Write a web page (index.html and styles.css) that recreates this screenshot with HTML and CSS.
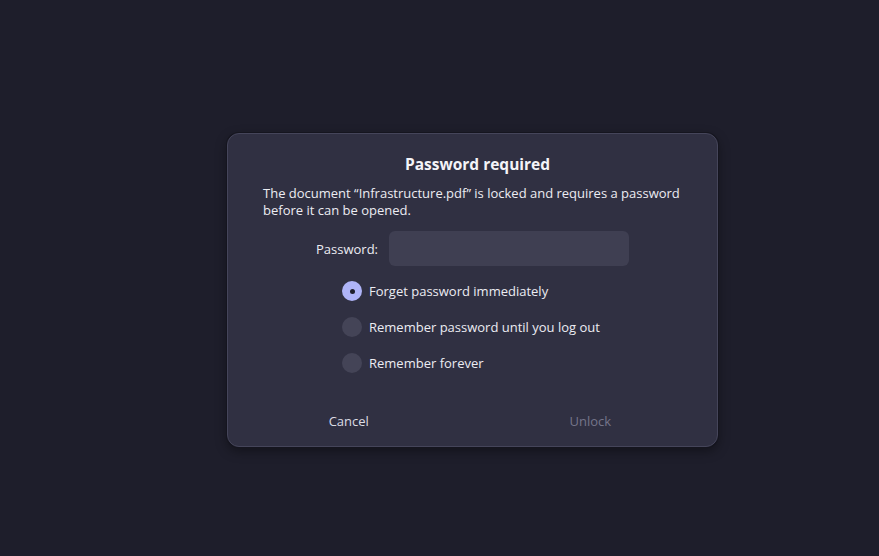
FILE: index.html
```html
<!DOCTYPE html>
<html>
<head>
<meta charset="utf-8">
<link rel="stylesheet" href="styles.css">
</head>
<body>
<div class="screen">
  <div class="dialog">
    <h1 class="title">Password required</h1>
    <p class="body">The document “Infrastructure.pdf” is locked and requires a password before it can be opened.</p>
    <div class="field">
      <span class="label">Password:</span>
      <div class="entry"></div>
    </div>
    <div class="options">
      <div class="option"><span class="radio checked"><span class="dot"></span></span><span>Forget password immediately</span></div>
      <div class="option"><span class="radio"></span><span>Remember password until you log out</span></div>
      <div class="option"><span class="radio"></span><span>Remember forever</span></div>
    </div>
    <div class="buttons">
      <div class="btn">Cancel</div>
      <div class="btn disabled">Unlock</div>
    </div>
  </div>
</div>
</body>
</html>
```
FILE: styles.css
```css
html, body {
  margin: 0;
  padding: 0;
  background: #1e1e2b;
}
.screen {
  width: 879px;
  height: 556px;
  display: flex;
  align-items: flex-start;
  justify-content: flex-start;
  padding: 133px 0 0 227px;
  box-sizing: border-box;
  font-family: "Open Sans", "Noto Sans", sans-serif;
  color: #ececf2;
}
.dialog {
  width: 491px;
  height: 314px;
  box-sizing: border-box;
  background: #303042;
  border: 1px solid #45455a;
  border-radius: 12px;
  box-shadow: 0 0 0 1px #15151f, 0 4px 12px rgba(0,0,0,0.4);
  display: flex;
  flex-direction: column;
  padding: 0 30px 0 35px;
}
.title {
  margin: 20px 0 0 5px;
  font-size: 15.5px;
  font-weight: 700;
  text-align: center;
  line-height: 20px;
  color: #f4f4f8;
}
.body {
  margin: 11px 0 0;
  font-size: 13px;
  line-height: 17px;
}
.field {
  display: flex;
  align-items: center;
  gap: 11px;
  margin-top: 12px;
  padding-left: 53px;
}
.label {
  font-size: 13px;
}
.entry {
  width: 240px;
  height: 35px;
  background: #3f3f52;
  border-radius: 6px;
}
.options {
  display: flex;
  flex-direction: column;
  gap: 16px;
  margin-top: 15px;
  padding-left: 79px;
}
.option {
  display: flex;
  align-items: center;
  gap: 7px;
  font-size: 13px;
  height: 20px;
}
.radio {
  width: 20px;
  height: 20px;
  border-radius: 50%;
  background: #444457;
  display: flex;
  align-items: center;
  justify-content: center;
}
.radio.checked {
  background: #afb4f8;
}
.dot {
  width: 5px;
  height: 5px;
  border-radius: 50%;
  background: #1e1e2b;
}
.buttons {
  margin-top: auto;
  margin-left: -35px;
  margin-right: -30px;
  display: flex;
  height: 50px;
}
.btn {
  flex: 1;
  display: flex;
  align-items: center;
  justify-content: center;
  font-size: 13px;
  color: #dcdce4;
}
.btn.disabled {
  color: #75758a;
  padding-right: 6px;
}
```
